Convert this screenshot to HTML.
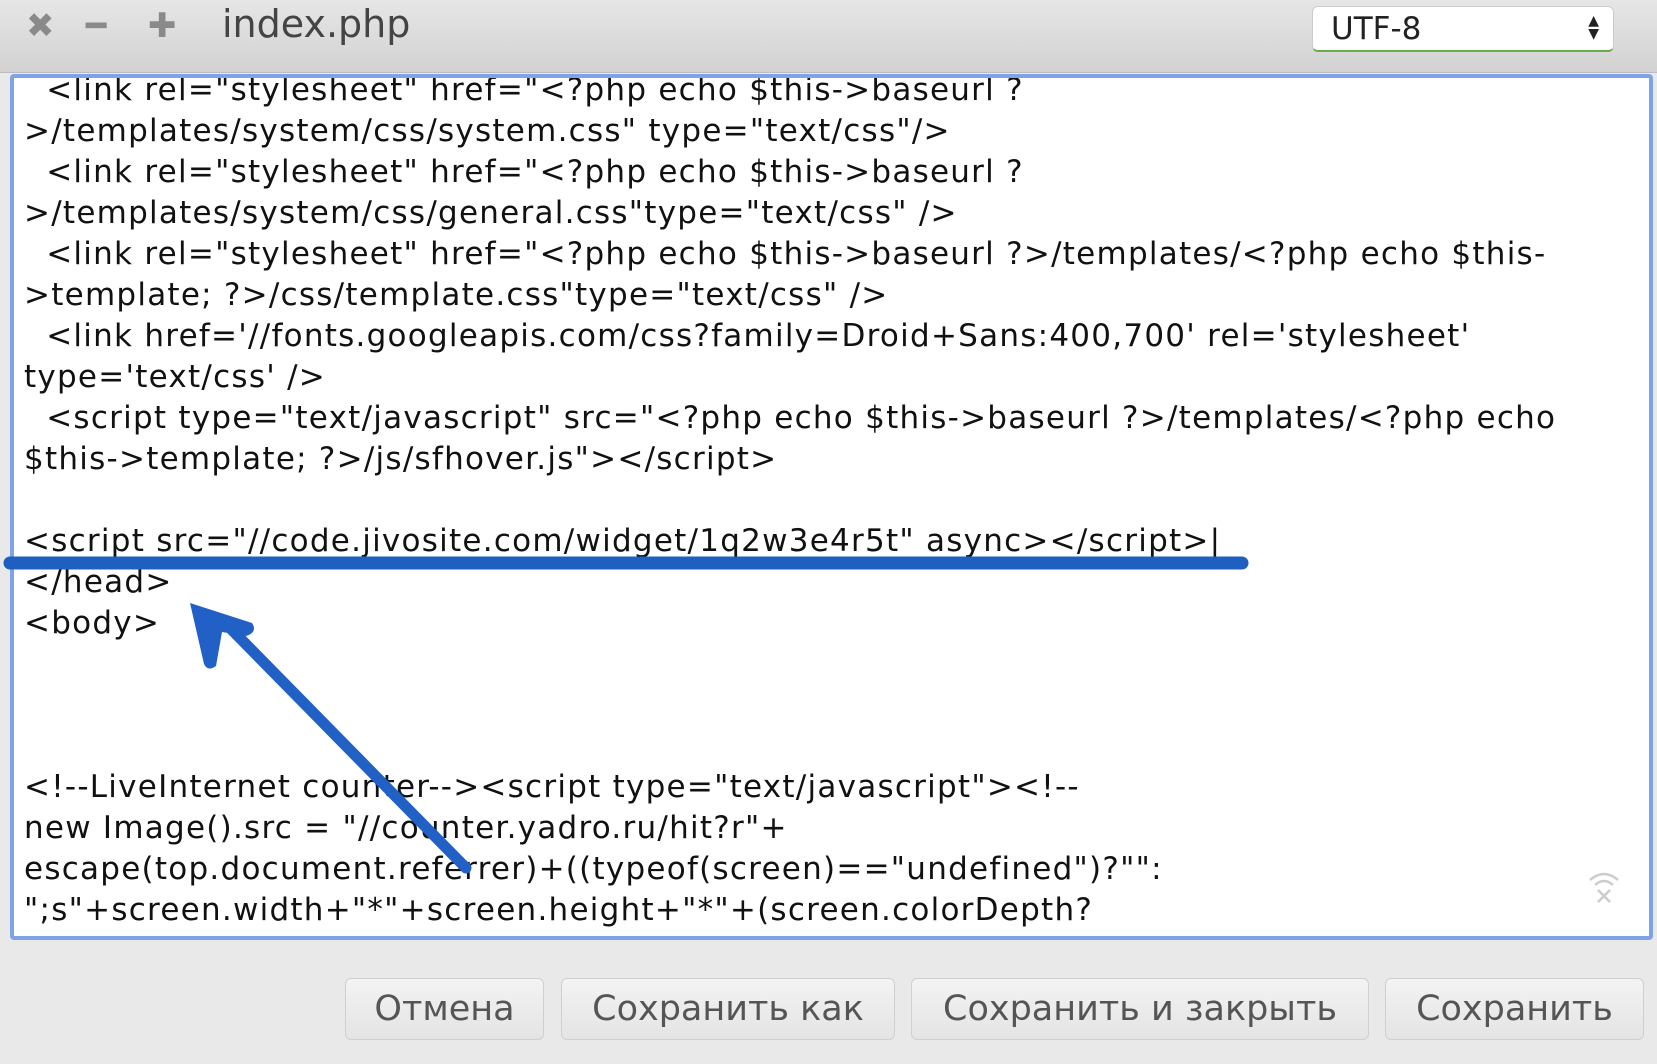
<!DOCTYPE html>
<html><head><meta charset="utf-8"><style>
html,body{margin:0;padding:0;width:1657px;height:1064px;overflow:hidden;background:#e9e9e9;font-family:"DejaVu Sans","Liberation Sans",sans-serif;}
.top{position:absolute;left:0;top:0;width:1657px;height:72px;background:linear-gradient(#e6e6e6,#d2d2d2);border-bottom:1px solid #bdbdbd;}
.ic{position:absolute;top:6px;font-size:34px;color:#8a8a8a;font-weight:bold;}
.title{position:absolute;left:222px;top:2px;font-size:38px;color:#444;}
.sel{position:absolute;left:1312px;top:6px;width:302px;height:46px;background:#fff;border-radius:6px;border:1px solid #ccc;border-bottom:2px solid #6aad4a;box-sizing:border-box;}
.sel span{position:absolute;left:18px;top:4px;font-size:31px;color:#222;}
.sel i{position:absolute;right:14px;top:8px;font-style:normal;font-size:14px;line-height:13px;color:#222;}
.ed{position:absolute;left:10px;top:74px;width:1643px;height:866px;box-sizing:border-box;border:4px solid #7ea3e8;border-radius:4px;background:#fff;overflow:hidden;}
.code{position:absolute;left:10px;top:-8px;font-size:31px;letter-spacing:1.25px;line-height:41px;color:#111;white-space:pre;}
.btn{position:absolute;top:978px;height:62px;box-sizing:border-box;border:1px solid #cfcfcf;border-radius:6px;background:linear-gradient(#f3f3f3,#e4e4e4);font-size:35px;color:#555;text-align:center;line-height:60px;}
</style></head><body>
<div class="top">
<div class="ic" style="left:26px">✖</div>
<div class="ic" style="left:86px">━</div>
<div class="ic" style="left:148px">✚</div>
<div class="title">index.php</div>
<div class="sel"><span>UTF-8</span><i>▲<br>▼</i></div>
</div>
<div class="ed"><div class="code">  &lt;link rel="stylesheet" href="&lt;?php echo $this-&gt;baseurl ?
&gt;/templates/system/css/system.css" type="text/css"/&gt;
  &lt;link rel="stylesheet" href="&lt;?php echo $this-&gt;baseurl ?
&gt;/templates/system/css/general.css"type="text/css" /&gt;
  &lt;link rel="stylesheet" href="&lt;?php echo $this-&gt;baseurl ?&gt;/templates/&lt;?php echo $this-
&gt;template; ?&gt;/css/template.css"type="text/css" /&gt;
  &lt;link href='//fonts.googleapis.com/css?family=Droid+Sans:400,700' rel='stylesheet'
type='text/css' /&gt;
  &lt;script type="text/javascript" src="&lt;?php echo $this-&gt;baseurl ?&gt;/templates/&lt;?php echo
$this-&gt;template; ?&gt;/js/sfhover.js"&gt;&lt;/script&gt;

&lt;script src="//code.jivosite.com/widget/1q2w3e4r5t" async&gt;&lt;/script&gt;|
&lt;/head&gt;
&lt;body&gt;



&lt;!--LiveInternet counter--&gt;&lt;script type="text/javascript"&gt;&lt;!--
new Image().src = "//counter.yadro.ru/hit?r"+
escape(top.document.referrer)+((typeof(screen)=="undefined")?"":
";s"+screen.width+"*"+screen.height+"*"+(screen.colorDepth?</div>
<svg style="position:absolute;left:1570px;top:790px" width="40" height="40" viewBox="0 0 40 40" fill="none" stroke="#ccc" stroke-width="2.5"><path d="M6 12 Q20 0 34 12"/><path d="M11 17 Q20 9 29 17"/><path d="M14 22 L26 34 M26 22 L14 34"/></svg>
</div>
<svg style="position:absolute;left:0;top:0" width="1657" height="1064">
<line x1="10" y1="563" x2="1242" y2="563" stroke="#1f5fbf" stroke-width="13" stroke-linecap="round"/>
<line x1="466" y1="868" x2="232" y2="630" stroke="#2160c4" stroke-width="11" stroke-linecap="round"/>
<path d="M190 603 L252 623 Q258 632 246 636 L222 632 L216 666 Q208 672 204 664 Z" fill="#2160c4"/>
</svg>
<div class="btn" style="left:345px;width:199px">Отмена</div>
<div class="btn" style="left:561px;width:334px">Сохранить как</div>
<div class="btn" style="left:911px;width:458px">Сохранить и закрыть</div>
<div class="btn" style="left:1385px;width:259px">Сохранить</div>
</body></html>
